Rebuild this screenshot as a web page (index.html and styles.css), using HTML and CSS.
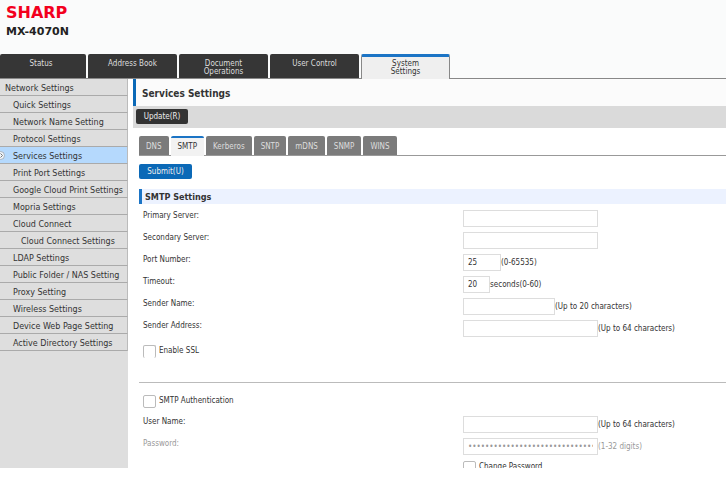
FILE: index.html
```
<!DOCTYPE html>
<html lang="en">
<head>
    <meta charset="utf-8">
    <title>Services Settings - MX-4070N</title>
    <link rel="stylesheet" href="styles.css">
</head>
<body>
<div class="page">

    <header class="header">
        <div class="logo">SHARP</div>
        <div class="model">MX-4070N</div>
    </header>

    <nav class="main-nav">
        <a class="nav-tab first" href="#">Status</a>
        <a class="nav-tab" href="#">Address Book</a>
        <a class="nav-tab" href="#">Document<br>Operations</a>
        <a class="nav-tab" href="#">User Control</a>
        <a class="nav-tab active" href="#">System<br>Settings</a>
    </nav>

    <div class="content">
        <nav class="sidebar">
            <a class="top" href="#">Network Settings</a>
            <a href="#">Quick Settings</a>
            <a href="#">Network Name Setting</a>
            <a href="#">Protocol Settings</a>
            <a class="active" href="#">
                <svg class="marker" width="9" height="9" viewBox="0 0 9 9">
                    <circle cx="4.5" cy="4.5" r="4" fill="#eef4fb" stroke="#9aa5b0" stroke-width="0.8"/>
                    <path d="M4.5 2.5 L6.5 4.5 L4.5 6.5" fill="none" stroke="#777" stroke-width="1"/>
                </svg>Services Settings</a>
            <a href="#">Print Port Settings</a>
            <a href="#">Google Cloud Print Settings</a>
            <a href="#">Mopria Settings</a>
            <a href="#">Cloud Connect</a>
            <a class="sub" href="#">Cloud Connect Settings</a>
            <a href="#">LDAP Settings</a>
            <a href="#">Public Folder / NAS Setting</a>
            <a href="#">Proxy Setting</a>
            <a href="#">Wireless Settings</a>
            <a href="#">Device Web Page Setting</a>
            <a href="#">Active Directory Settings</a>
        </nav>

        <main class="main">
            <h1>Services Settings</h1>
            <div class="toolbar">
                <button type="button" class="btn">Update(R)</button>
            </div>

            <form class="settings">
                <div class="tabs">
                    <a href="#">DNS</a>
                    <a class="active" href="#">SMTP</a>
                    <a href="#">Kerberos</a>
                    <a href="#">SNTP</a>
                    <a href="#">mDNS</a>
                    <a href="#">SNMP</a>
                    <a href="#">WINS</a>
                </div>

                <button type="button" class="btn submit">Submit(U)</button>

                <h2>SMTP Settings</h2>

                <div class="group">
                    <div class="row">
                        <label for="primary">Primary Server:</label>
                        <div class="field"><input type="text" id="primary"></div>
                    </div>
                    <div class="row">
                        <label for="secondary">Secondary Server:</label>
                        <div class="field"><input type="text" id="secondary"></div>
                    </div>
                    <div class="row">
                        <label for="port">Port Number:</label>
                        <div class="field"><input type="text" id="port" class="short" value="25">(0-65535)</div>
                    </div>
                    <div class="row">
                        <label for="timeout">Timeout:</label>
                        <div class="field"><input type="text" id="timeout" class="tiny" value="20">seconds(0-60)</div>
                    </div>
                    <div class="row">
                        <label for="sender-name">Sender Name:</label>
                        <div class="field"><input type="text" id="sender-name" class="medium">(Up to 20 characters)</div>
                    </div>
                    <div class="row">
                        <label for="sender-address">Sender Address:</label>
                        <div class="field"><input type="text" id="sender-address">(Up to 64 characters)</div>
                    </div>
                    <div class="check">
                        <input type="checkbox" id="ssl" class="cut"><label for="ssl">Enable SSL</label>
                    </div>
                </div>

                <div class="group auth">
                    <div class="check">
                        <input type="checkbox" id="auth"><label for="auth">SMTP Authentication</label>
                    </div>
                    <div class="row">
                        <label for="user">User Name:</label>
                        <div class="field"><input type="text" id="user">(Up to 64 characters)</div>
                    </div>
                    <div class="row disabled">
                        <label for="password">Password:</label>
                        <div class="field"><input type="password" id="password" value="12345678901234567890123456789012" disabled>(1-32 digits)</div>
                    </div>
                    <div class="row">
                        <span></span>
                        <div class="check">
                            <input type="checkbox" id="change"><label for="change">Change Password</label>
                        </div>
                    </div>
                </div>
            </form>
        </main>
    </div>

</div>
</body>
</html>
```

FILE: styles.css
```
* {
    box-sizing: border-box;
}

body {
    margin: 0;
    background: #fff;
    color: #333;
    font-family: "DejaVu Sans Condensed", "DejaVu Sans", sans-serif;
    font-size: 8px;
    line-height: 10px;
}

a {
    color: inherit;
    text-decoration: none;
}

.page {
    display: flex;
    flex-direction: column;
    height: calc(100vh - 20px);
    overflow: hidden;
}

/* header */
.header {
    flex: none;
    height: 54px;
    padding: 5px 6px;
    background: #fafbfb;
}

.logo {
    color: #f3001d;
    font-family: "DejaVu Sans", sans-serif;
    font-size: 16px;
    font-weight: bold;
    line-height: 16px;
}

.model {
    margin-top: 4px;
    color: #222;
    font-family: "DejaVu Sans", sans-serif;
    font-size: 11px;
    font-weight: bold;
    line-height: 14px;
}

.main-nav {
    flex: none;
    display: flex;
    gap: 2px;
    height: 25px;
    background: #fafbfb;
    border-bottom: 1px solid #888;
}

.nav-tab {
    width: 89px;
    height: 24px;
    padding-top: 6px;
    background: #363636;
    border-radius: 2px 2px 0 0;
    color: #ddd;
    text-align: center;
    line-height: 8px;
}

.nav-tab.first {
    width: 86px;
    padding-right: 4px;
}

.nav-tab.active {
    height: 25px;
    padding-top: 3px;
    background: #efefef;
    border: 1px solid #888;
    border-top: 3px solid #1b74c5;
    border-bottom: 0;
    color: #333;
}

/* sidebar */
.content {
    flex: 1;
    display: flex;
    min-height: 0;
}

.sidebar {
    flex: none;
    display: flex;
    flex-direction: column;
    width: 128px;
    background: #dedede;
    font-family: "DejaVu Sans", sans-serif;
}

.sidebar a {
    position: relative;
    height: 17px;
    padding-left: 13px;
    border-right: 1px solid #bbb;
    border-bottom: 1px solid #aaa;
    line-height: 20px;
    white-space: nowrap;
}

.sidebar a.top {
    padding-left: 5px;
}

.sidebar a.sub {
    padding-left: 21px;
}

.sidebar a.active {
    background: #b5d9fd;
}

.marker {
    position: absolute;
    left: -4px;
    top: 4px;
}

/* main column */
.main {
    flex: 1;
    min-width: 0;
    padding-left: 5px;
}

h1 {
    height: 27px;
    margin: 0;
    padding-left: 6px;
    background: #fbfbfb;
    border-left: 3px solid #0b69b7;
    font-size: 10px;
    line-height: 30px;
}

.toolbar {
    height: 22px;
    padding: 3px;
    background: #dadada;
}

.btn {
    display: block;
    width: 52px;
    height: 15px;
    padding: 0;
    background: #333;
    border: 0;
    border-radius: 2px;
    color: #eee;
    font: inherit;
    line-height: 15px;
}

.btn.submit {
    width: 53px;
    margin-top: 8px;
    background: #0b69b7;
}

.settings {
    padding: 8px 0 0 6px;
}

.tabs {
    display: flex;
    gap: 2px;
    height: 20px;
    border-bottom: 1px solid #999;
}

.tabs a {
    height: 19px;
    padding: 0 7px;
    background: #7b7b7b;
    border-radius: 2px 2px 0 0;
    color: #ddd;
    line-height: 21px;
}

.tabs a.active {
    height: 20px;
    background: #f2f2f2;
    border-top: 2px solid #1b74c5;
    color: #333;
    line-height: 17px;
}

h2 {
    height: 15px;
    margin: 10px 0 0;
    padding-left: 3px;
    background: #ecf2ff;
    border-left: 3px solid #1b74c5;
    font-size: 9px;
    line-height: 16px;
}

.group {
    padding: 4px 0 0 4px;
}

.group.auth {
    margin-top: 24px;
    padding-top: 11px;
    border-top: 1px solid #bbb;
}

.row {
    display: grid;
    grid-template-columns: 320px 1fr;
    height: 22px;
}

.row > label {
    padding-top: 3px;
}

.field {
    display: flex;
    align-items: center;
    height: 17px;
    margin-top: 2px;
    white-space: nowrap;
}

.field input {
    width: 135px;
    height: 17px;
    padding: 0 4px;
    background: #fff;
    border: 1px solid #ddd;
    color: #333;
    font: inherit;
}

.field .short {
    width: 38px;
}

.field .tiny {
    width: 27px;
}

.field .medium {
    width: 92px;
}

.check {
    display: flex;
    align-items: center;
    gap: 3px;
    height: 14px;
    margin-top: 4px;
}

.check input {
    appearance: none;
    width: 13px;
    height: 13px;
    margin: 0;
    background: #fff;
    border: 1px solid #bbb;
    border-radius: 2px;
}

.check input.cut {
    border-bottom: 0;
}

.auth > .check {
    margin: 0 0 6px;
}

.row > .check {
    margin-top: 2px;
}

.disabled,
.disabled input {
    color: #999;
}
```
